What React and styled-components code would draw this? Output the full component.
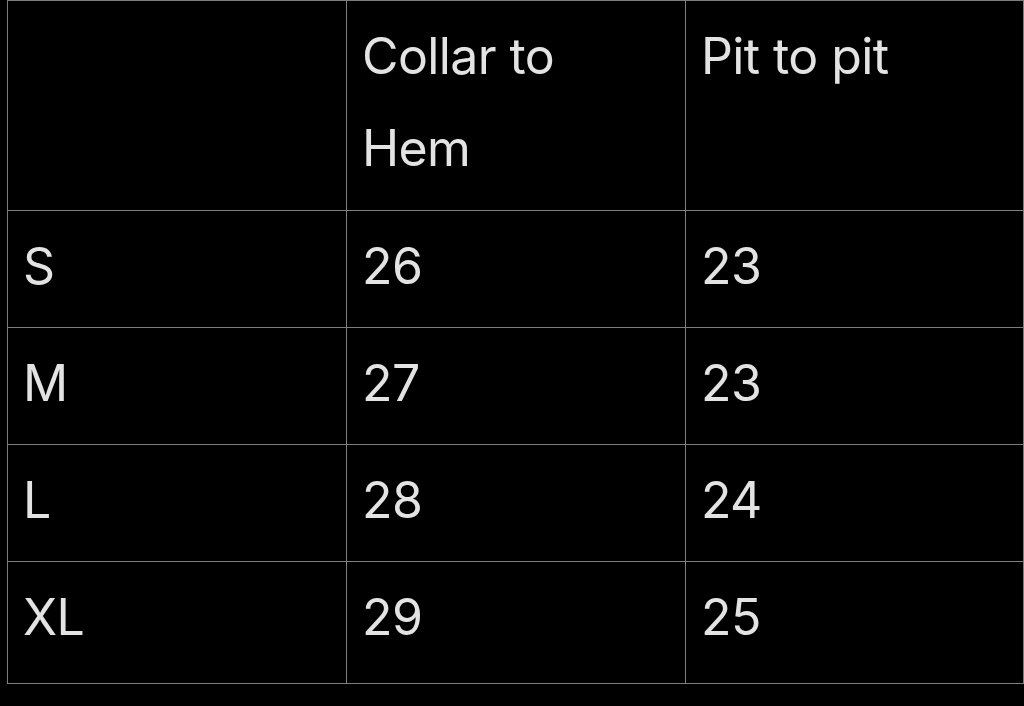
import styled, { createGlobalStyle } from 'styled-components';

const GlobalStyle = createGlobalStyle`
  html, body {
    margin: 0;
    padding: 0;
    background: #000;
  }
  body {
    font-family: Inter, "Liberation Sans", sans-serif;
    -webkit-font-smoothing: antialiased;
  }
`;

const Page = styled.div`
  padding-left: 7px;
  width: 1024px;
  height: 706px;
  box-sizing: border-box;
  background: #000;
`;

const Table = styled.table`
  width: 1017px;
  border-collapse: collapse;
  table-layout: fixed;
  color: #e3e3e3;
  font-size: 50px;
  line-height: 92px;
  letter-spacing: -0.6px;
`;

const Col = styled.col`
  width: ${({ $width }) => ($width ? `${$width}px` : 'auto')};
`;

const Cell = styled.td`
  border: 1px solid #7d7d7d;
  padding: 9px 16px 15px 15px;
  vertical-align: top;
  text-align: left;
  font-weight: 400;
`;

const HeadCell = styled(Cell).attrs({ as: 'th' })`
  padding-bottom: 16px;
`;

const Row = styled.tr`
  &:last-child td {
    padding-bottom: 20px;
  }
`;

const sizes = [
  { size: 'S', length: 26, width: 23 },
  { size: 'M', length: 27, width: 23 },
  { size: 'L', length: 28, width: 24 },
  { size: 'XL', length: 29, width: 25 },
];

export default function App() {
  return (
    <Page>
      <GlobalStyle />
      <Table>
        <colgroup>
          <Col $width={339} />
          <Col $width={339} />
          <Col />
        </colgroup>
        <thead>
          <tr>
            <HeadCell />
            <HeadCell>Collar to Hem</HeadCell>
            <HeadCell>Pit to pit</HeadCell>
          </tr>
        </thead>
        <tbody>
          {sizes.map((s) => (
            <Row key={s.size}>
              <Cell>{s.size}</Cell>
              <Cell>{s.length}</Cell>
              <Cell>{s.width}</Cell>
            </Row>
          ))}
        </tbody>
      </Table>
    </Page>
  );
}
